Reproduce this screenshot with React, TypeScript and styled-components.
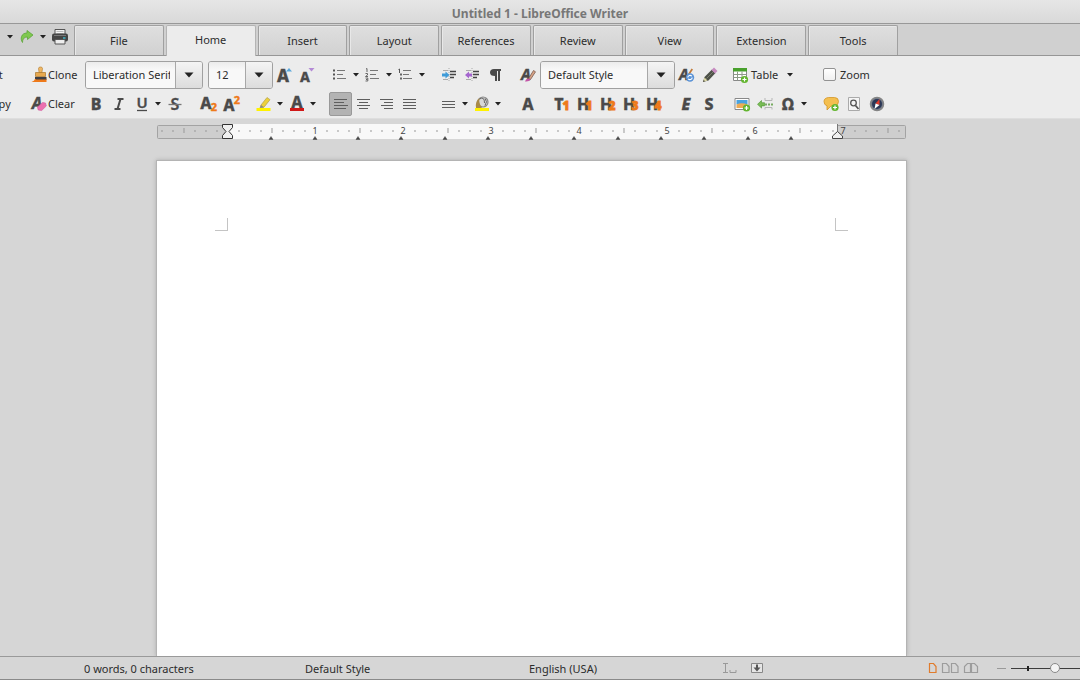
import React from "react";
import styled, { createGlobalStyle, css } from "styled-components";

const INK = "#4a4a4a";
const ORANGE = "#ee7a1b";
const GREEN = "#62b52e";

const GlobalStyle = createGlobalStyle`
  * { box-sizing: border-box; }
  body { margin: 0; overflow: hidden; background: #d6d6d6; }
  body, button, input { font-family: "Noto Sans", "Open Sans", sans-serif; font-size: 11px; color: #2c2c2c; }
  button { border: 0; padding: 0; margin: 0; background: none; cursor: default; }
  svg { display: block; flex: none; overflow: visible; }
`;

const Window = styled.div`
  display: flex;
  flex-direction: column;
  height: 100vh;
  overflow: hidden;
`;

const TitleBar = styled.header`
  display: flex;
  align-items: center;
  justify-content: center;
  flex: none;
  height: 24px;
  padding-top: 4px;
  background: linear-gradient(#e6e6e6, #d9d9d9);
  border-bottom: 1px solid #989898;
`;

const Title = styled.h1`
  margin: 0;
  font-family: "Noto Sans", sans-serif;
  font-size: 12px;
  line-height: 18px;
  font-weight: 700;
  color: #777;
`;

const TabBar = styled.div`
  display: flex;
  flex: none;
  height: 32px;
  background: #d0d0d0;
  box-shadow: inset 0 -1px #969696;
`;

const QuickAccess = styled.div`
  display: flex;
  flex: none;
  align-items: center;
  height: 26px;
  width: 74px;
  padding-left: 5px;
`;

const TabList = styled.nav`
  display: flex;
  flex: 0 1 824px;
  gap: 2px;
  padding-top: 1px;
`;

const Tab = styled.button<{ $active?: boolean }>`
  flex: 1;
  height: 30px;
  line-height: 28px;
  border: 1px solid #a0a0a0;
  border-bottom: 0;
  border-radius: 2px 2px 0 0;
  background: linear-gradient(#dfdfdf, #d1d1d1);
  box-shadow: inset 1px 1px #e8e8e8;
  ${(p) =>
    p.$active &&
    css`
      height: 31px;
      padding-bottom: 3px;
      border-color: #b4b4b4;
      background: #ececec;
      box-shadow: none;
    `}
`;

const ToolBar = styled.div`
  display: flex;
  flex-direction: column;
  flex: none;
  gap: 3px;
  padding: 5px 0 2px;
  background: #ececec;
  border-bottom: 1px solid #dedede;
`;

const ToolRow = styled.div<{ $height: number }>`
  display: flex;
  align-items: stretch;
  height: ${(p) => p.$height}px;
  margin-left: -15px;
`;

const Group = styled.div<{ $before?: number }>`
  display: flex;
  flex: none;
  align-items: stretch;
  margin-left: ${(p) => p.$before ?? 0}px;
`;

const IconButton = styled.button<{ $active?: boolean }>`
  display: flex;
  align-items: center;
  justify-content: center;
  flex: none;
  width: 23px;
  ${(p) =>
    p.$active &&
    css`
      background: #b3b3b3;
      border: 1px solid #999;
      border-radius: 2px;
    `}
`;

const ArrowButton = styled(IconButton)`
  width: 10px;
`;

const LabelButton = styled.button<{ $width: number; $gap?: number }>`
  display: flex;
  align-items: center;
  flex: none;
  gap: ${(p) => p.$gap ?? 0}px;
  width: ${(p) => p.$width}px;
  padding-bottom: 1px;
`;

const ComboBox = styled.div<{ $width: number }>`
  display: flex;
  flex: none;
  width: ${(p) => p.$width}px;
  border: 1px solid #a0a0a0;
  border-radius: 3px;
  overflow: hidden;
`;

const ComboInput = styled.input`
  flex: 1;
  min-width: 0;
  padding: 0 5px 1px 7px;
  border: 0;
  outline: 0;
  background: linear-gradient(#ececec, #f8f8f8 8px);
`;

const ComboArrow = styled.button`
  display: flex;
  align-items: center;
  justify-content: center;
  flex: none;
  width: 27px;
  border-left: 1px solid #a8a8a8;
  background: linear-gradient(#f4f4f4, #dcdcdc);
`;

const CheckLabel = styled.label`
  display: flex;
  align-items: center;
  gap: 4px;
  padding-bottom: 1px;
`;

const CheckBox = styled.input`
  appearance: none;
  width: 13px;
  height: 13px;
  margin: 0;
  border: 1px solid #929292;
  border-radius: 2px;
  background: linear-gradient(#fff, #f0f0f0);
`;

const Workspace = styled.main`
  display: flex;
  flex-direction: column;
  align-items: center;
  flex: 1;
  min-height: 0;
  padding: 5px 17px 0 0;
  background: #d6d6d6;
`;

const Page = styled.article`
  display: flex;
  justify-content: space-between;
  flex: 1;
  width: 751px;
  margin-top: 19px;
  padding: 57px 58px;
  background: #fff;
  border: 1px solid #b4b4b4;
  border-bottom: 0;
  box-shadow: 0 0 4px #aaa;
`;

const MarginMark = styled.span<{ $side: "left" | "right" }>`
  width: 13px;
  height: 13px;
  border-bottom: 1px solid #c4c4c4;
  ${(p) => (p.$side === "left" ? "border-right" : "border-left")}: 1px solid #c4c4c4;
`;

const StatusBar = styled.footer`
  display: flex;
  align-items: center;
  flex: none;
  height: 24px;
  padding-left: 84px;
  overflow: hidden;
  background: #d6d6d6;
  border-top: 1px solid #9a9a9a;
  border-bottom: 1px solid #8a8a8a;
`;

const StatusItem = styled.span<{ $width: number }>`
  flex: 0 0 ${(p) => p.$width}px;
  padding-top: 1px;
  line-height: 20px;
`;

const StatusButtons = styled.div<{ $width: number }>`
  display: flex;
  align-items: center;
  gap: 4px;
  flex: 0 0 ${(p) => p.$width}px;
`;

const ZoomSlider = styled.input`
  appearance: none;
  flex: none;
  width: 88px;
  height: 12px;
  margin: 0;
  background:
    linear-gradient(#222, #222) 16px 4px / 2px 5px no-repeat,
    linear-gradient(#3c3c3c, #3c3c3c) 0 6px / 100% 1px no-repeat;
  &::-webkit-slider-thumb {
    appearance: none;
    width: 10px;
    height: 10px;
    border: 1px solid #888;
    border-radius: 50%;
    background: #f4f4f4;
  }
`;

const Svg = ({ children, w = 18, h = 18 }: { children: React.ReactNode; w?: number; h?: number }) => (
  <svg width={w} height={h} viewBox={`0 0 ${w} ${h}`} fill="none" aria-hidden="true">
    {children}
  </svg>
);

type GlyphProps = {
  t: string;
  x?: number;
  y?: number;
  size?: number;
  fill?: string;
  italic?: boolean;
  weight?: number;
};
const Glyph = ({ t, x = 9, y = 15, size = 16, fill = INK, italic, weight = 800 }: GlyphProps) => (
  <text
    x={x}
    y={y}
    fontSize={size}
    fontWeight={weight}
    fontStyle={italic ? "italic" : "normal"}
    fontFamily="Noto Sans"
    textAnchor="middle"
    fill={fill}
    stroke={fill}
    strokeWidth=".3"
  >
    {t}
  </text>
);

const Down = () => (
  <Svg w={8} h={6}>
    <path d="M1 1h6L4 4.5z" fill="#222" />
  </Svg>
);

const ComboDown = () => (
  <Svg w={12} h={8}>
    <path d="M1.5 1.500h9L6 6.500z" fill="#222" />
  </Svg>
);

const Plus = ({ x, y }: { x: number; y: number }) => (
  <>
    <circle cx={x} cy={y} r="3.600" fill={GREEN} />
    <path d={`M${x - 2} ${y}h4M${x} ${y - 2}v4`} stroke="#fff" strokeWidth="1.200" />
  </>
);

const Letter = (p: GlyphProps) => (
  <Svg>
    <Glyph {...p} />
  </Svg>
);

const Heading = ({ base, level }: { base: string; level: string }) => (
  <Svg>
    <Glyph t={base} x={base === "T" ? 6 : 7} />
    <text
      x={13}
      y={15}
      fontSize={12}
      fontWeight={900}
      fontFamily="Noto Sans"
      textAnchor="middle"
      fill={ORANGE}
      stroke={ORANGE}
      strokeWidth=".8"
    >
      {level}
    </text>
  </Svg>
);

const Lines = ({ rows }: { rows: [number, number][] }) => (
  <Svg>
    {rows.map(([from, to], i) => (
      <path
        key={i}
        d={`M${from} ${(rows.length === 3 ? 6 : 4) + i * 3 + 0.5}H${to}`}
        stroke="#5e5e5e"
      />
    ))}
  </Svg>
);

const ListIcon = ({ kind }: { kind: "bullet" | "number" | "outline" }) => (
  <Svg>
    <path d="M6 4.500h8M6 8.500h6M6 12.500h9" stroke="#777" />
    {kind === "bullet" && (
      <path d="M2 3.500h2v2H2zM2 7.500h2v2H2zM2 11.500h2v2H2z" fill="#555" />
    )}
    {kind === "number" && (
      <path
        d="M2 3 3 2.500V6M1.500 7.500h2V9L1.500 10.500H4M1.500 12h2.300v3H1.500M2 13.500h1.500"
        stroke="#666"
      />
    )}
    {kind === "outline" && (
      <>
        <path d="M1.500 3.500 2.500 3v4" stroke="#555" />
        <path d="M3 7.500h2v2H3zM3 11.500h2v2H3z" fill="#666" />
      </>
    )}
  </Svg>
);

const IndentIcon = ({ color, flip }: { color: string; flip?: boolean }) => (
  <Svg>
    <path d="M3 4.500h5M3 13.500h5" stroke="#aaa" />
    <path d="M10 5.500h6M10 8.500h6M10 11.500h4" stroke="#444" strokeWidth="1.500" />
    <path d="M9 2v14" stroke="#aaa" strokeDasharray="1 1" />
    <path
      d={flip ? "M9 7.500H6V5.500L2 9l4 3.500v-2H9z" : "M2 7.500h3.500v-2L9.500 9l-4 3.500v-2H2z"}
      fill={color}
    />
  </Svg>
);

const CloneIcon = () => (
  <Svg>
    <path d="M8.500 2.500q0-1.500 2-1.500t2 1.500l-.7 4.500h-2.600z" fill="#efb765" stroke="#b98235" strokeWidth=".7" />
    <path d="M5.500 6.500h10v4h-10z" fill="#e8a94f" stroke="#a8762e" strokeWidth=".7" />
    <path d="M5 11h11.500v3H5z" fill="#3f3f45" />
    <path d="M5 13h11.500v3H1.500Q4.500 15 5 13z" fill="#ee7a1b" />
    <path d="M6 13h10" stroke="#3f3f45" />
  </Svg>
);

const ClearIcon = () => (
  <Svg>
    <Glyph t="A" x={7} y={14} italic />
    <path d="m7.500 12 5-4.500 3 .5.8 3-4.600 4.500-3.500-.5z" fill="#ec6fb0" stroke="#d2559a" strokeWidth=".6" />
  </Svg>
);

const RedoIcon = () => (
  <Svg>
    <path
      d="M4.500 14.500C2 11 3 5 9 5V2.500L15 7l-5.500 4.500V9C6 9 4.500 11 4.500 14.500z"
      fill="#7fc94f"
      stroke="#5da53a"
      strokeWidth=".8"
    />
  </Svg>
);

const PrintIcon = () => (
  <Svg>
    <path d="M4 1.500h10V7H4z" fill="#f2f2f2" stroke="#555" />
    <path d="M5.500 3.500h7M5.500 5.500h7" stroke="#bbb" />
    <rect x="1" y="5.500" width="16" height="8" rx="2" fill="#444" />
    <path d="M3 7.500h12" stroke="#777" />
    <path d="M12 10h2.500" stroke="#3fb6c8" strokeWidth="1.500" />
    <path d="M4 11.500h10V16H4z" fill="#ededed" stroke="#555" />
  </Svg>
);

const GrowIcon = ({ shrink }: { shrink?: boolean }) => (
  <Svg>
    <Glyph t="A" x={shrink ? 6 : 7} y={16} size={shrink ? 14 : 17} />
    {shrink ? (
      <path d="M9.500 2h6l-3 3.500z" fill="#b48ad6" />
    ) : (
      <path d="M10 5.500h6L13 2z" fill="#5aa8dc" />
    )}
  </Svg>
);

const ScriptIcon = ({ up }: { up?: boolean }) => (
  <Svg>
    <Glyph t="A" x={6} y={up ? 16 : 14} size={16} />
    <Glyph t="2" x={14} y={up ? 9 : 16} size={11} fill={ORANGE} />
  </Svg>
);

const HighlightIcon = () => (
  <Svg>
    <path d="m6 10 6-7.500 3 2.200-6 7.500-4 .8z" fill="#ecd03a" stroke="#b2a04a" strokeWidth=".7" />
    <path d="m6 10 3 2.200L5 13z" fill="#888" />
    <path d="M1.500 13h14v3h-14z" fill="#fff200" />
  </Svg>
);

const FontColorIcon = () => (
  <Svg>
    <Glyph t="A" x={9} y={13} size={16} />
    <path d="M2 13h14v3H2z" fill="#d01818" />
  </Svg>
);

const BucketIcon = () => (
  <Svg>
    <ellipse cx="10" cy="7" rx="5" ry="5" fill="#d8d8d8" stroke="#888" strokeWidth="1.200" />
    <path d="M6.500 4q5-3 5 4M12 3.500q3 3 0 7" stroke="#666" />
    <path d="M3 13q-1-7 3.500-10-1 5 2.500 10z" fill="#a88a4a" />
    <path d="M2 13h14v3H2z" fill="#fff200" />
  </Svg>
);

const StyleBrushIcon = () => (
  <Svg>
    <Glyph t="A" x={7} y={14} size={15} italic />
    <path d="m9.500 12.500 5-8 2 1.300-5 7.700z" fill="#d8a487" stroke="#6a4a40" strokeWidth=".7" />
    <path d="M6 15.500q1-3 3.500-3l2 1.300Q10 16 6 15.500z" fill="#c455a8" />
  </Svg>
);

const StyleUpdateIcon = () => (
  <Svg>
    <Glyph t="A" x={6} y={14} size={15} italic />
    <path d="m10 8 3.500-5.500L15 3.500 12 8z" fill="#c07a3a" />
    <circle cx="12" cy="11.500" r="4.200" fill="#5b93d6" />
    <path d="M9.800 11.500a2.200 2.200 0 0 1 4-1.200M14.200 11.500a2.200 2.200 0 0 1-4 1.200" stroke="#fff" strokeWidth="1.100" />
  </Svg>
);

const PencilIcon = () => (
  <Svg>
    <path d="m3.500 11 7.500-7.500 3.500 3.500-7 7.500L2 16z" fill="#4d5148" />
    <path d="m5.500 12.500 7-7" stroke="#777c6c" />
    <path d="m10.500 4 2.500-2.500L16.500 5 14 7.500z" fill="#c78ac0" />
    <path d="m3.500 11.500 3 3L2 16z" fill="#ddd9a5" />
    <path d="m2.800 14-.9 2 2-.7z" fill="#333" />
  </Svg>
);

const TableIcon = () => (
  <Svg>
    <path d="M2.500 2.500h13v12h-13z" fill="#fff" stroke="#888" />
    <path d="M2 2h14v3.500H2z" fill="#48a02c" />
    <path d="M2.500 8.500h13M2.500 11.500h13M6.500 5.500v9M11 5.500v9" stroke="#8d9a88" />
    <Plus x={13.5} y={13.5} />
  </Svg>
);

const ImageIcon = () => (
  <Svg>
    <path d="M2 3.500h14v11H2z" fill="#fff" stroke="#888" />
    <path d="M3.500 5h11v4.500h-11z" fill="#4aa3e0" />
    <path d="M3.500 9.500q5-2.500 11 0V13h-11z" fill="#edab55" />
    <Plus x={13.5} y={13} />
  </Svg>
);

const BreakIcon = () => (
  <Svg>
    <path d="M9 3v2.500h7V3M9 14.500v-2h7v2" stroke="#b5b5b5" />
    <path d="M9 9.500h8" stroke="#76ab60" strokeWidth="2" strokeDasharray="2 1" />
    <path d="M8.500 7.700H5.500V5.500L1.500 9.300l4 3.800v-2.200h3z" fill="#78bd54" stroke="#4c9230" strokeWidth=".6" />
  </Svg>
);

const CommentIcon = () => (
  <Svg>
    <path
      d="M6.500 2.500h6q4 0 4 4t-4 4.500H9L5 15v-4.200Q2 10 2 6.500t4.500-4z"
      fill="#f4bf4f"
      stroke="#d39527"
      strokeWidth=".8"
    />
    <Plus x={13} y={12.5} />
  </Svg>
);

const PreviewIcon = () => (
  <Svg>
    <path d="M3.500 2.500h11v13h-11z" fill="#f5f5f5" stroke="#aaa" />
    <circle cx="8.500" cy="8" r="2.800" stroke="#555" strokeWidth="1.300" />
    <path d="m10.500 10.500 3 3.500" stroke="#555" strokeWidth="1.700" />
  </Svg>
);

const CompassIcon = () => (
  <Svg>
    <circle cx="9" cy="9" r="6.500" fill="#6d7688" stroke="#858585" strokeWidth="1.500" />
    <circle cx="9" cy="9" r="5" fill="#2c3856" />
    <path d="M11.500 4 11.500 10l-4-1.500z" fill="#e23a2a" />
    <path d="M6.500 14 7.500 8.500l4 1.500z" fill="#fff" />
  </Svg>
);

const StrikeIcon = () => (
  <Svg>
    <Glyph t="S" weight={600} />
    <path d="M2.500 9.500h13" stroke="#777" strokeWidth="1.300" />
  </Svg>
);

const UnderlineIcon = () => (
  <Svg>
    <Glyph t="U" y={13} size={15} weight={600} />
    <path d="M4 15.500h10" stroke={INK} strokeWidth="1.300" />
  </Svg>
);

const Drop = ({ label }: { label: string }) => (
  <ArrowButton aria-label={label}>
    <Down />
  </ArrowButton>
);

const Tool = ({ label, active, drop, children }: {
  label: string;
  active?: boolean;
  drop?: boolean;
  children: React.ReactNode;
}) => (
  <>
    <IconButton aria-label={label} title={label} $active={active}>
      {children}
    </IconButton>
    {drop && <Drop label={`${label} options`} />}
  </>
);

const Combo = ({ label, value, width }: { label: string; value: string; width: number }) => (
  <ComboBox $width={width}>
    <ComboInput aria-label={label} defaultValue={value} />
    <ComboArrow aria-label={`${label} list`}>
      <ComboDown />
    </ComboArrow>
  </ComboBox>
);

const INCH = 88;
const ORIGIN = 72;
const RIGHT = 682;

const Ruler = () => {
  const ticks: React.ReactNode[] = [];
  for (let i = -6; i <= 61; i++) {
    const x = ORIGIN + i * (INCH / 8);
    if (i === 0) continue;
    if (i > 0 && i % 8 === 0) {
      ticks.push(
        <text key={i} x={x - 1} y={10} fontSize={9} fontFamily="Noto Sans" textAnchor="middle" fill="#444">
          {i / 8}
        </text>
      );
    } else {
      const half = i % 4 === 0;
      ticks.push(<path key={i} d={`M${x} ${half ? 4 : 6}v${half ? 5 : 2}`} stroke="#999" />);
    }
  }
  const stops = Array.from({ length: 13 }, (_, i) => ORIGIN + Math.round((i + 1) * 43.3));
  return (
    <svg width="751" height="17" viewBox="0 0 751 17" fill="none" role="img" aria-label="Horizontal ruler">
      <rect x="1.500" y="1.500" width="748" height="13" rx="1" fill="#cecece" stroke="#a3a3a3" />
      <rect x={ORIGIN} y="0" width={RIGHT - ORIGIN} height="15" fill="#f8f8f8" />
      {ticks}
      {stops.map((x) => (
        <path key={x} d={`M${x - 2} 15.500h4l-2-3z`} fill="#444" stroke="#444" strokeWidth=".5" />
      ))}
      <path d="M66.500.5h10v3L73 7.500l3.500 4v3h-10v-3l3.500-4-3.500-4z" fill="#f0f0f0" stroke="#333" />
      <path d="M681.500 0v8" stroke="#777" />
      <path d="m676.500 12 5-4.500 5 4.500v2.500h-10z" fill="#f0f0f0" stroke="#444" />
    </svg>
  );
};

const Sheet = ({ color = "#9c9c9c", count = 1 }: { color?: string; count?: number }) => (
  <Svg w={count * 9} h={12}>
    {Array.from({ length: count }, (_, i) => (
      <path key={i} d={`M${i * 9 + 1.5} 1.500h4l2.500 3v6h-6.500z`} stroke={color} strokeWidth="1.200" />
    ))}
  </Svg>
);

const Book = () => (
  <Svg w={16} h={12}>
    <path d="M7.500 1.500h-3l-3 3v6h6zM8.500 1.500h3l3 3v6h-6z" stroke="#9c9c9c" strokeWidth="1.200" />
  </Svg>
);

const TABS = ["File", "Home", "Insert", "Layout", "References", "Review", "View", "Extension", "Tools"];

export default function App() {
  return (
    <Window>
      <GlobalStyle />
      <TitleBar>
        <Title>Untitled 1 - LibreOffice Writer</Title>
      </TitleBar>

      <TabBar>
        <QuickAccess>
          <Drop label="Undo history" />
          <Tool label="Redo" drop>
            <RedoIcon />
          </Tool>
          <Tool label="Print">
            <PrintIcon />
          </Tool>
        </QuickAccess>
        <TabList aria-label="Ribbon tabs">
          {TABS.map((tab) => (
            <Tab key={tab} $active={tab === "Home"}>
              {tab}
            </Tab>
          ))}
        </TabList>
      </TabBar>

      <ToolBar>
        <ToolRow $height={28}>
          <LabelButton $width={45}>Cut</LabelButton>
          <LabelButton $width={51}>
            <CloneIcon />
            Clone
          </LabelButton>
          <Group $before={4}>
            <Combo label="Font name" value="Liberation Serif" width={118} />
          </Group>
          <Group $before={5}>
            <Combo label="Font size" value="12" width={65} />
            <Tool label="Increase size"><GrowIcon /></Tool>
            <Tool label="Decrease size"><GrowIcon shrink /></Tool>
          </Group>
          <Group $before={9}>
            <Tool label="Bullets" drop><ListIcon kind="bullet" /></Tool>
            <Tool label="Numbering" drop><ListIcon kind="number" /></Tool>
            <Tool label="Outline" drop><ListIcon kind="outline" /></Tool>
          </Group>
          <Group $before={10}>
            <Tool label="Increase indent"><IndentIcon color="#3f9bd8" /></Tool>
            <Tool label="Decrease indent"><IndentIcon color="#a566cf" flip /></Tool>
            <Tool label="Formatting marks">
              <Svg>
                <path d="M15 3v2h-1v10h-2V5h-1v10H9v-5Q4 10 4 6.500T8 3z" fill={INK} />
              </Svg>
            </Tool>
          </Group>
          <Group $before={10}>
            <Tool label="Styles"><StyleBrushIcon /></Tool>
          </Group>
          <Group $before={1}>
            <Combo label="Paragraph style" value="Default Style" width={135} />
            <Tool label="Update style"><StyleUpdateIcon /></Tool>
            <Tool label="New style"><PencilIcon /></Tool>
          </Group>
          <Group $before={10}>
            <LabelButton $width={54} $gap={2}>
              <TableIcon />
              Table
            </LabelButton>
            <Drop label="Table options" />
          </Group>
          <Group $before={28}>
            <CheckLabel>
              <CheckBox type="checkbox" />
              Zoom
            </CheckLabel>
          </Group>
        </ToolRow>

        <ToolRow $height={24}>
          <LabelButton $width={45}>Copy</LabelButton>
          <LabelButton $width={51}>
            <ClearIcon />
            Clear
          </LabelButton>
          <Group $before={3}>
            <Tool label="Bold"><Letter t="B" /></Tool>
            <Tool label="Italic">
              <Svg>
                <path d="M7.500 4h6M4.500 14h6M10.500 4 7.500 14" stroke={INK} strokeWidth="2" />
              </Svg>
            </Tool>
            <Tool label="Underline" drop><UnderlineIcon /></Tool>
            <Tool label="Strikethrough"><StrikeIcon /></Tool>
          </Group>
          <Group $before={11}>
            <Tool label="Subscript"><ScriptIcon /></Tool>
            <Tool label="Superscript"><ScriptIcon up /></Tool>
          </Group>
          <Group $before={9}>
            <Tool label="Highlighting" drop><HighlightIcon /></Tool>
            <Tool label="Font color" drop><FontColorIcon /></Tool>
          </Group>
          <Group $before={11}>
            <Tool label="Align left" active><Lines rows={[[2, 15], [2, 12], [2, 16], [2, 14]]} /></Tool>
            <Tool label="Center"><Lines rows={[[2, 15], [4, 13], [2, 15], [4, 13]]} /></Tool>
            <Tool label="Align right"><Lines rows={[[2, 15], [6, 15], [3, 15], [6, 15]]} /></Tool>
            <Tool label="Justify"><Lines rows={[[2, 15], [2, 15], [2, 15], [2, 15]]} /></Tool>
          </Group>
          <Group $before={16}>
            <Tool label="Line spacing" drop><Lines rows={[[2, 15], [2, 15], [2, 15]]} /></Tool>
            <Tool label="Background" drop><BucketIcon /></Tool>
          </Group>
          <Group $before={13}>
            <Tool label="Default character"><Letter t="A" /></Tool>
          </Group>
          <Group $before={11}>
            <Tool label="Title"><Heading base="T" level="1" /></Tool>
            {["1", "2", "3", "4"].map((n) => (
              <Tool key={n} label={`Heading ${n}`}><Heading base="H" level={n} /></Tool>
            ))}
          </Group>
          <Group $before={9}>
            <Tool label="Emphasis"><Letter t="E" italic /></Tool>
            <Tool label="Strong"><Letter t="S" /></Tool>
          </Group>
          <Group $before={10}>
            <Tool label="Image"><ImageIcon /></Tool>
            <Tool label="Page break"><BreakIcon /></Tool>
            <Tool label="Symbol" drop><Letter t="Ω" /></Tool>
          </Group>
          <Group $before={10}>
            <Tool label="Comment"><CommentIcon /></Tool>
            <Tool label="Print preview"><PreviewIcon /></Tool>
            <Tool label="Navigator"><CompassIcon /></Tool>
          </Group>
        </ToolRow>
      </ToolBar>

      <Workspace>
        <Ruler />
        <Page aria-label="Document page">
          <MarginMark $side="left" />
          <MarginMark $side="right" />
        </Page>
      </Workspace>

      <StatusBar>
        <StatusItem $width={221}>0 words, 0 characters</StatusItem>
        <StatusItem $width={224}>Default Style</StatusItem>
        <StatusItem $width={193}>English (USA)</StatusItem>
        <StatusButtons $width={206}>
          <Svg w={24} h={12}>
            <path d="M1 1.500h5M1 10.500h5M3.500 1.500v9M8 8v2.500h6V8" stroke="#999" />
          </Svg>
          <Svg w={14} h={12}>
            <path d="M1.500 1.500h11v9h-11z" fill="#e6e6e6" stroke="#888" />
            <path d="M6 2.500h2v3h2.500L7 9.500 3.500 5.500H6z" fill="#555" />
          </Svg>
        </StatusButtons>
        <StatusButtons $width={69}>
          <Sheet color="#e07b2c" />
          <Sheet count={2} />
          <Book />
        </StatusButtons>
        <Svg w={14} h={12}>
          <path d="M0 6.500h9" stroke="#999" />
        </Svg>
        <ZoomSlider type="range" aria-label="Zoom level" defaultValue={50} />
      </StatusBar>
    </Window>
  );
}
